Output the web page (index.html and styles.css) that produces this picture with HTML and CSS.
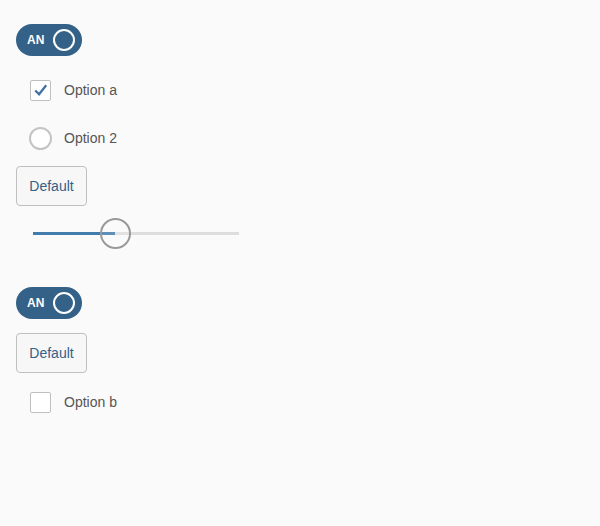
FILE: index.html
```html
<!DOCTYPE html>
<html>
<head>
<meta charset="utf-8">
<link rel="stylesheet" href="styles.css">
</head>
<body>
<div class="page">
  <div class="switch sw1"><span class="sw-text">AN</span><span class="knob"></span></div>

  <div class="check-row cr1">
    <span class="box-area"><span class="box">
      <svg width="20" height="20" viewBox="0 0 20 20"><path d="M4.5 10.5 L8.5 14.5 L16 5" fill="none" stroke="#3f72a3" stroke-width="2.4" stroke-linecap="butt" stroke-linejoin="miter"/></svg>
    </span></span>
    <span class="label">Option a</span>
  </div>

  <div class="check-row">
    <span class="box-area"><span class="radio"></span></span>
    <span class="label">Option 2</span>
  </div>

  <button class="btn b1">Default</button>

  <div class="slider">
    <div class="track"><div class="fill" style="width: 40%"></div></div>
    <div class="handle"></div>
  </div>

  <div class="switch sw2"><span class="sw-text">AN</span><span class="knob"></span></div>

  <button class="btn b2">Default</button>

  <div class="check-row cr3">
    <span class="box-area"><span class="box"></span></span>
    <span class="label">Option b</span>
  </div>
</div>
</body>
</html>
```
FILE: styles.css
```css
html, body {
  margin: 0;
  padding: 0;
  background: #fafafa;
  font-family: "Liberation Sans", Arial, sans-serif;
}
.page {
  padding: 24px 16px 0 16px;
  display: flex;
  flex-direction: column;
  align-items: flex-start;
}
.switch {
  width: 66px;
  height: 32px;
  box-sizing: border-box;
  border-radius: 16px;
  background: #346187;
  display: flex;
  align-items: center;
  position: relative;
  flex-shrink: 0;
}
.sw-text {
  color: #fff;
  font-size: 12px;
  font-weight: bold;
  margin-left: 11px;
  letter-spacing: 0;
}
.knob {
  width: 22px;
  height: 22px;
  box-sizing: border-box;
  border: 2px solid #fff;
  border-radius: 50%;
  margin-left: auto;
  margin-right: 7px;
}
.check-row {
  height: 48px;
  display: flex;
  align-items: center;
}
.cr1 { margin-top: 10px; }
.cr3 { margin-top: 5px; }
.box-area {
  width: 48px;
  height: 48px;
  display: flex;
  align-items: center;
  justify-content: center;
}
.box {
  width: 21px;
  height: 21px;
  box-sizing: border-box;
  border: 1px solid #bfbfbf;
  border-radius: 2px;
  background: #fff;
  display: flex;
  align-items: center;
  justify-content: center;
}
.box svg { display: block; }
.radio {
  width: 23px;
  height: 23px;
  box-sizing: border-box;
  border: 2px solid #c4c4c4;
  border-radius: 50%;
  background: #fff;
}
.label {
  font-size: 14px;
  color: #555;
}
.btn {
  height: 40px;
  width: 71px;
  box-sizing: border-box;
  border: 1px solid #bfbfbf;
  border-radius: 4px;
  background: #f7f7f7;
  color: #346187;
  font-family: "Liberation Sans", Arial, sans-serif;
  font-size: 14px;
  padding: 0;
}
.b1 { margin-top: 4px; }
.b2 { margin-top: 14px; }
.slider {
  position: relative;
  width: 206px;
  height: 31px;
  margin-left: 17px;
  margin-top: 12px;
  display: flex;
  align-items: center;
}
.track {
  width: 100%;
  height: 3px;
  background: #dddddd;
}
.fill {
  height: 100%;
  background: #427cac;
}
.handle {
  position: absolute;
  left: calc(40% - 15.5px);
  top: 0;
  width: 31px;
  height: 31px;
  box-sizing: border-box;
  border: 2px solid #999;
  border-radius: 50%;
  background: rgba(255, 255, 255, 0.15);
}
.sw2 { margin-top: 38px; }
```
